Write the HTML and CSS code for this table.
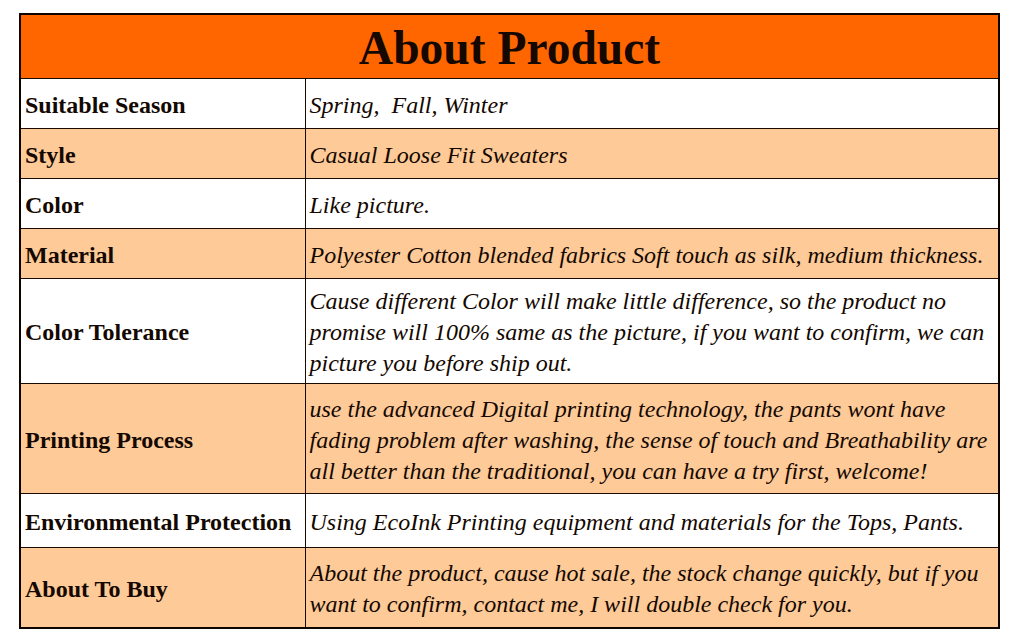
FILE: index.html
```html
<!DOCTYPE html>
<html>
<head>
<meta charset="utf-8">
<link rel="stylesheet" href="styles.css">
</head>
<body>
<div class="wrap">
<table class="product">
  <colgroup><col class="c1"><col class="c2"></colgroup>
  <tr class="head"><th colspan="2">About Product</th></tr>
  <tr class="r1 white"><td class="label">Suitable Season</td><td class="val">Spring,&nbsp; Fall, Winter</td></tr>
  <tr class="r1 peach"><td class="label">Style</td><td class="val">Casual Loose Fit Sweaters</td></tr>
  <tr class="r1 white"><td class="label">Color</td><td class="val">Like picture.</td></tr>
  <tr class="r1 peach"><td class="label">Material</td><td class="val">Polyester Cotton blended fabrics Soft touch as silk, medium thickness.</td></tr>
  <tr class="r3a white"><td class="label">Color Tolerance</td><td class="val">Cause different Color will make little difference, so the product no<br>promise will 100% same as the picture, if you want to confirm, we can<br>picture you before ship out.</td></tr>
  <tr class="r3b peach"><td class="label">Printing Process</td><td class="val">use the advanced Digital printing technology, the pants wont have<br>fading problem after washing, the sense of touch and Breathability are<br>all better than the traditional, you can have a try first, welcome!</td></tr>
  <tr class="r1b white"><td class="label">Environmental Protection</td><td class="val">Using EcoInk Printing equipment and materials for the Tops, Pants.</td></tr>
  <tr class="r2 peach"><td class="label">About To Buy</td><td class="val">About the product, cause hot sale, the stock change quickly, but if you<br>want to confirm, contact me, I will double check for you.</td></tr>
</table>
</div>
</body>
</html>
```
FILE: styles.css
```css
html, body {
  margin: 0;
  padding: 0;
  background: #ffffff;
}
.wrap {
  padding: 13px 0 0 19px;
}
.product {
  width: 979px;
  border-collapse: collapse;
  border: 2px solid #0d0400;
  font-family: "Liberation Serif", "Times New Roman", serif;
  color: #140800;
  table-layout: fixed;
}
.c1 { width: 285px; }
.c2 { width: 694px; }
.product th {
  background: #ff6600;
  height: 64px;
  font-size: 47.5px;
  font-weight: bold;
  text-align: center;
  padding: 4px 0 0 0;
  border: 1px solid #1a0a00;
  line-height: 1;
  box-sizing: border-box;
}
.product td {
  border: 1px solid #1a0a00;
  padding: 4px 4px 0 4px;
  font-size: 24px;
  line-height: 31px;
  vertical-align: middle;
}
.product td.label {
  font-weight: bold;
  white-space: nowrap;
}
.product td.val {
  font-style: italic;
  white-space: nowrap;
}
.white td { background: #ffffff; }
.peach td { background: #fdca98; }
.r1 td { height: 45px; }
.r3a td { height: 100px; }
.r3b td { height: 105px; }
.r1b td { height: 49px; }
.r2 td { height: 75px; }
```
